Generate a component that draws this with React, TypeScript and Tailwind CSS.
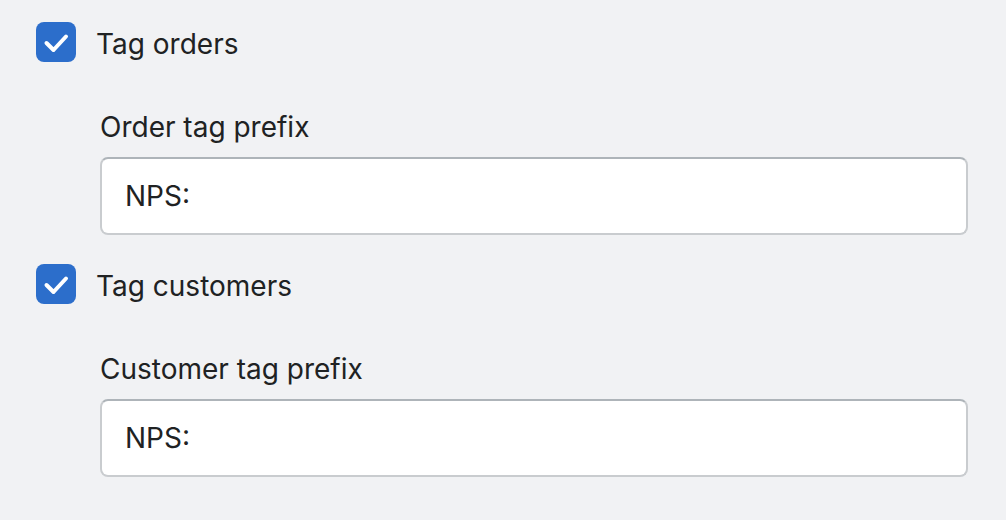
import React from "react";

const fields = [
  { check: "Tag orders", label: "Order tag prefix", value: "NPS:" },
  { check: "Tag customers", label: "Customer tag prefix", value: "NPS:" },
];

function Checkbox() {
  return (
    <span className="flex h-[40px] w-[40px] shrink-0 items-center justify-center rounded-[8px] bg-[#2c6ecb]">
      <svg width="40" height="40" viewBox="0 0 40 40" fill="none">
        <path
          d="M10.5 21 L17.5 28 L30 14.5"
          stroke="#fff"
          strokeWidth="4"
          strokeLinecap="round"
          strokeLinejoin="round"
        />
      </svg>
    </span>
  );
}

export default function App() {
  return (
    <div
      className="h-[520px] w-[1006px] bg-[#f1f2f4] pl-[36px] pr-[38px] pt-[22px] text-[#202223]"
      style={{ fontFamily: "Inter, 'Noto Sans', sans-serif" }}
    >
      <div className="flex flex-col gap-[29px]">
        {fields.map((f) => (
          <div key={f.check}>
            <label className="flex h-[40px] items-center gap-[20px]">
              <Checkbox />
              <span className="mt-[4px] text-[28px] leading-[40px]">{f.check}</span>
            </label>
            <div className="mt-[45px] pl-[64px]">
              <div className="text-[28px] leading-[40px]">{f.label}</div>
              <div className="mt-[10px] flex h-[78px] items-center rounded-[8px] border-2 border-[#c9cccf] border-t-[#aeb4b9] bg-white pl-[23px] text-[28px]">
                {f.value}
              </div>
            </div>
          </div>
        ))}
      </div>
    </div>
  );
}
